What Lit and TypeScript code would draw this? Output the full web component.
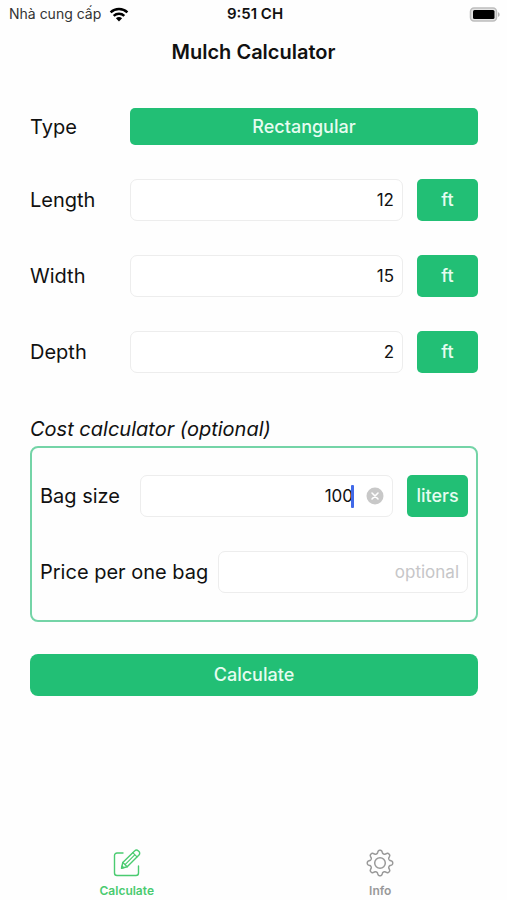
import { LitElement, html, css, svg } from "lit";
import { customElement, state } from "lit/decorators.js";

const GREEN = css`#22bf75`;

/** Outline of an eight-toothed cog centred on 14,14. */
const gearPath = (() => {
  const points: string[] = [];
  for (let i = 0; i < 160; i++) {
    const a = (i / 160) * Math.PI * 2;
    const wave = Math.tanh(1.6 * Math.cos(8 * a)) / Math.tanh(1.6);
    const r = 11.2 + 1.5 * wave;
    points.push(`${(14 + r * Math.sin(a)).toFixed(2)} ${(14 - r * Math.cos(a)).toFixed(2)}`);
  }
  return `M${points.join("L")}Z`;
})();

const wifiIcon = svg`
  <svg class="wifi" viewBox="0 0 20 15" aria-hidden="true">
    <g fill="none" stroke="#000" stroke-width="2.5">
      <path d="M1.6 5.4C6.3.9 13.7.9 18.4 5.4" />
      <path d="M4.7 8.8c3-2.8 7.6-2.8 10.6 0" />
    </g>
    <path d="M10 14.4 6.9 11.2c1.7-1.6 4.5-1.6 6.2 0Z" />
  </svg>`;

const batteryIcon = svg`
  <svg class="battery" viewBox="0 0 32 15" aria-hidden="true">
    <rect x="1.5" y="1" width="26" height="13" rx="3.5" fill="#e4e4e4" stroke="#bdbdbd" stroke-width="1.5" />
    <rect x="4" y="3" width="21.500" height="9" rx="1.5" />
    <path d="M29 5.2c2.200.7 2.200 3.9 0 4.6Z" fill="#b4b4b4" />
  </svg>`;

const composeIcon = svg`
  <svg class="tab-icon" viewBox="0 0 28 28" fill="none" stroke="currentColor" stroke-width="1.4"
    stroke-linecap="round" stroke-linejoin="round" aria-hidden="true">
    <path d="M10 4H4a2.500 2.500 0 0 0-2.500 2.500v17.500A2.500 2.500 0 0 0 4 26.500h19a2.500 2.500 0 0 0 2.500-2.500v-7" />
    <path d="M8.500 19.200l1.300-5.700L21.800 1.700a2.300 2.300 0 0 1 3.300 0l.9.9a2.300 2.300 0 0 1 0 3.300L14.200 17.800Z" />
    <path d="M9.800 13.500l4.400 4.300M19.800 3.700l4.200 4.200M12.300 15.400 21.500 6.200M8.500 19.200l2.300-.6-1.700-1.700Z" stroke-width="1.200" />
  </svg>`;

const gearIcon = svg`
  <svg class="tab-icon" viewBox="0 0 28 28" fill="none" stroke="currentColor" stroke-width="1.5"
    stroke-linejoin="round" aria-hidden="true">
    <path d=${gearPath} />
    <circle cx="14" cy="14" r="5.300" />
  </svg>`;

@customElement("app-root")
export class AppRoot extends LitElement {
  @state() private bagSize = "100";

  static styles = css`
    :host {
      display: flex;
      flex-direction: column;
      min-height: 100vh;
      background: #fefefe;
      color: #111;
      font: 20px/26px Inter, "Noto Sans", sans-serif;
    }
    * {
      box-sizing: border-box;
    }
    .status {
      display: grid;
      grid-template-columns: 1fr auto 1fr;
      align-items: center;
      height: 28px;
      padding: 0 6px 0 9px;
      font-size: 14px;
      line-height: 20px;
    }
    .carrier {
      display: flex;
      align-items: center;
      gap: 8px;
      color: #333;
    }
    .clock {
      font-size: 15px;
      font-weight: 600;
    }
    .wifi {
      width: 20px;
      height: 15px;
    }
    .battery {
      width: 32px;
      height: 15px;
      justify-self: end;
    }
    .title {
      margin: 0;
      padding: 11px 0;
      text-align: center;
      font-size: 20px;
      line-height: 26px;
      font-weight: 600;
    }
    .form {
      display: flex;
      flex-direction: column;
      gap: 34px;
      padding: 32px 29px 0 30px;
    }
    .row {
      display: flex;
      align-items: center;
    }
    .name {
      flex: none;
      width: 100px;
    }
    .name.wide {
      width: 178px;
    }
    button {
      border: 0;
      padding: 0;
      font: inherit;
      cursor: pointer;
    }
    .fill {
      height: 42px;
      border-radius: 5px;
      background: ${GREEN};
      color: #e6fcf0;
      font-size: 18px;
      line-height: 24px;
      font-weight: 500;
    }
    .picker {
      flex: 1;
      height: 37px;
    }
    .unit {
      flex: none;
      width: 61px;
      margin-left: 14px;
    }
    .field {
      flex: 1;
      min-width: 0;
      display: flex;
      align-items: center;
      height: 42px;
      padding: 0 8px;
      border: 1px solid #ededed;
      border-radius: 7px;
      background: #fff;
    }
    input {
      flex: 1;
      min-width: 0;
      width: 100%;
      padding: 0;
      border: 0;
      outline: 0;
      background: none;
      color: #111;
      font: inherit;
      font-size: 17px;
      line-height: 24px;
      text-align: right;
    }
    input::placeholder {
      color: #c6c6c8;
      opacity: 1;
    }
    .caret {
      flex: none;
      width: 3px;
      height: 23px;
      margin-left: -2px;
      border-radius: 1px;
      background: #4169e8;
    }
    .clear {
      display: flex;
      flex: none;
      margin-left: 12px;
      background: none;
    }
    .clear svg {
      width: 18px;
      height: 18px;
    }
    .cost {
      min-width: 0;
      margin: 9px 0 0;
      padding: 0;
      border: 0;
    }
    .legend {
      padding: 0;
      margin-bottom: 4px;
      font-style: italic;
    }
    .box {
      display: flex;
      flex-direction: column;
      gap: 34px;
      padding: 27px 8px;
      border: 2px solid #74d4a7;
      border-radius: 8px;
    }
    .submit {
      margin-top: -2px;
      border-radius: 8px;
    }
    .tabs {
      display: grid;
      grid-template-columns: 1fr 1fr;
      margin-top: auto;
    }
    .tab {
      display: flex;
      flex-direction: column;
      align-items: center;
      gap: 6px;
      padding-bottom: 1px;
      color: #999;
      font-size: 12px;
      line-height: 16px;
      font-weight: 600;
      text-decoration: none;
    }
    .tab.active {
      color: #4acb70;
    }
    .tab-icon {
      width: 28px;
      height: 28px;
    }
  `;

  private dimension(id: string, name: string, value: string) {
    return html`
      <div class="row">
        <label class="name" for=${id}>${name}</label>
        <div class="field"><input id=${id} inputmode="decimal" .value=${value} /></div>
        <button class="fill unit" type="button" aria-label="${name} unit: ft">ft</button>
      </div>
    `;
  }

  render() {
    return html`
      <div class="status">
        <span class="carrier">Nhà cung cấp ${wifiIcon}</span>
        <span class="clock">9:51 CH</span>
        ${batteryIcon}
      </div>
      <h1 class="title">Mulch Calculator</h1>
      <form class="form" @submit=${(e: Event) => e.preventDefault()}>
        <div class="row">
          <label class="name" for="type">Type</label>
          <button id="type" class="fill picker" type="button">Rectangular</button>
        </div>
        ${this.dimension("length", "Length", "12")}
        ${this.dimension("width", "Width", "15")}
        ${this.dimension("depth", "Depth", "2")}
        <fieldset class="cost">
          <legend class="legend">Cost calculator (optional)</legend>
          <div class="box">
            <div class="row">
              <label class="name" for="bag">Bag size</label>
              <div class="field">
                <input
                  id="bag"
                  inputmode="decimal"
                  .value=${this.bagSize}
                  @input=${(e: Event) => (this.bagSize = (e.target as HTMLInputElement).value)}
                />
                <span class="caret"></span>
                <button class="clear" type="button" aria-label="Clear bag size" @click=${() => (this.bagSize = "")}>
                  <svg viewBox="0 0 18 18" aria-hidden="true">
                    <circle cx="9" cy="9" r="8.500" fill="#c8c8c8" />
                    <path d="M6 6l6 6M12 6l-6 6" stroke="#fff" stroke-width="1.600" stroke-linecap="round" />
                  </svg>
                </button>
              </div>
              <button class="fill unit" type="button" aria-label="Bag size unit: liters">liters</button>
            </div>
            <div class="row">
              <label class="name wide" for="price">Price per one bag</label>
              <div class="field"><input id="price" inputmode="decimal" placeholder="optional" /></div>
            </div>
          </div>
        </fieldset>
        <button class="fill submit" type="submit">Calculate</button>
      </form>
      <nav class="tabs">
        <a class="tab active" href="#calculate" aria-current="page">${composeIcon}Calculate</a>
        <a class="tab" href="#info">${gearIcon}Info</a>
      </nav>
    `;
  }
}
